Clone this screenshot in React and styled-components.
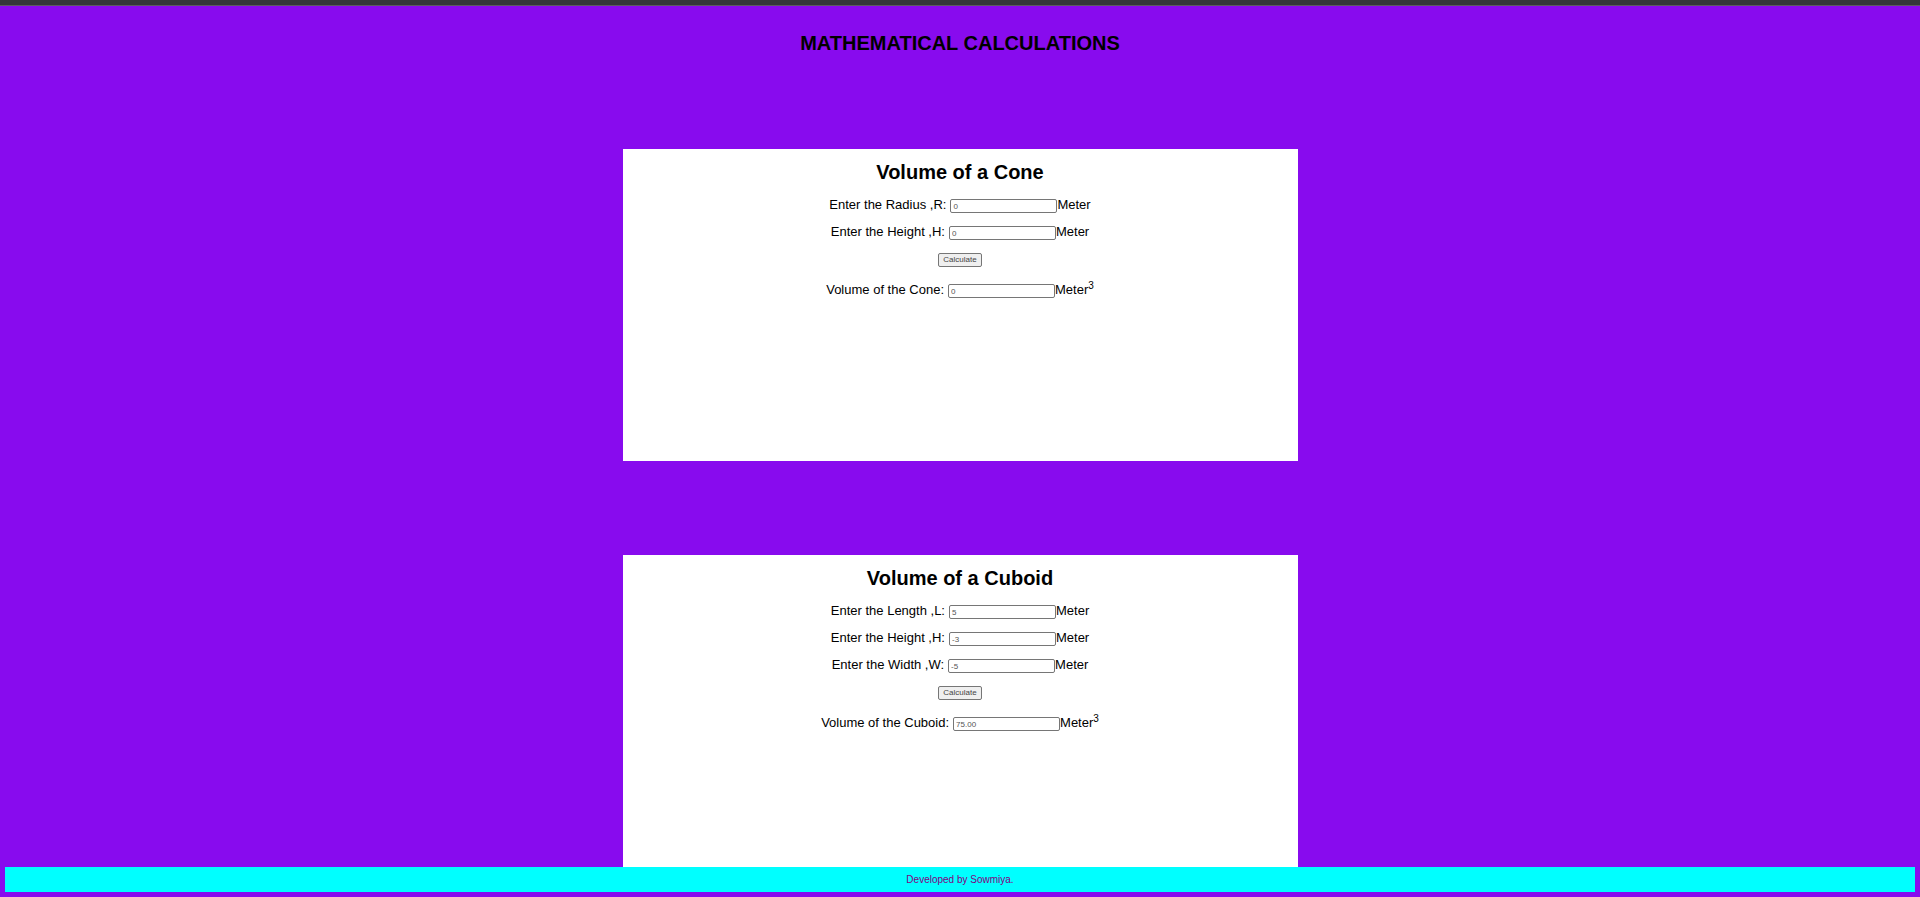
import React, { useState } from "react";
import styled, { createGlobalStyle } from "styled-components";

const GlobalStyle = createGlobalStyle`
  *, *::before, *::after { box-sizing: border-box; }
  body {
    margin: 0;
    background: #880bee;
    color: #000;
    font-family: Arial, "Liberation Sans", sans-serif;
    font-size: 13px;
  }
`;

const Page = styled.div`
  display: flex;
  flex-direction: column;
  min-height: 100vh;
  padding-bottom: 5px;
`;

const TopStrip = styled.div`
  height: 6px;
  background: #35363a;
  border-bottom: 1px solid #5c5b62;
`;

const Title = styled.h1`
  margin: 25px 0 93px;
  font-size: 20px;
  line-height: 25px;
  text-align: center;
`;

const Cards = styled.main`
  display: flex;
  flex-direction: column;
  align-items: center;
  gap: 94px;
`;

const Card = styled.form`
  width: 100%;
  max-width: 675px;
  min-height: 312px;
  padding: 11px 0;
  background: #fff;
  text-align: center;
`;

const CardTitle = styled.h2`
  margin: 0 0 12px;
  font-size: 20px;
  line-height: 25px;
`;

const Row = styled.div`
  display: flex;
  justify-content: center;
  align-items: center;
  height: 16px;
  margin-top: ${(p) => (p.$result ? "15px" : "11px")};
  line-height: 16px;
  white-space: pre;
`;

const Field = styled.input`
  width: 107px;
  height: 14px;
  margin: 2px 0 0 4px;
  padding: 1px 2px;
  border: 1px solid #767676;
  border-radius: 2px;
  background: #fff;
  color: #555;
  font: 8px Arial, "Liberation Sans", sans-serif;
`;

const Button = styled.button`
  width: 44px;
  height: 14px;
  margin-top: 2px;
  padding: 0;
  border: 1px solid #767676;
  border-radius: 2px;
  background: #efefef;
  color: #444;
  font: 8px/12px Arial, "Liberation Sans", sans-serif;
`;

const Power = styled.sup`
  align-self: flex-start;
  margin-top: -2px;
  font-size: 10px;
  line-height: 12px;
`;

const Footer = styled.footer`
  margin: 0 5px;
  background: #0ff;
  color: #800080;
  font-size: 10px;
  line-height: 25px;
  text-align: center;
`;

function Calculator({ id, title, inputs, resultLabel, initial, formula }) {
  const [values, setValues] = useState(inputs.map((i) => i.value));
  const [result, setResult] = useState(initial);

  const submit = (e) => {
    e.preventDefault();
    setResult(formula(...values.map(Number)).toFixed(2));
  };

  return (
    <Card onSubmit={submit}>
      <CardTitle>{title}</CardTitle>
      {inputs.map((input, n) => (
        <Row key={input.label}>
          <label htmlFor={`${id}-${n}`}>{input.label}</label>
          <Field
            id={`${id}-${n}`}
            value={values[n]}
            onChange={(e) =>
              setValues(values.map((v, k) => (k === n ? e.target.value : v)))
            }
          />
          <span>Meter</span>
        </Row>
      ))}
      <Row>
        <Button type="submit">Calculate</Button>
      </Row>
      <Row $result>
        <label htmlFor={`${id}-result`}>{resultLabel}</label>
        <Field id={`${id}-result`} value={result} readOnly />
        <span>Meter</span>
        <Power>3</Power>
      </Row>
    </Card>
  );
}

export default function App() {
  return (
    <>
      <GlobalStyle />
      <Page>
        <TopStrip />
        <Title>MATHEMATICAL CALCULATIONS</Title>
        <Cards>
          <Calculator
            id="cone"
            title="Volume of a Cone"
            inputs={[
              { label: "Enter the Radius ,R:", value: "0" },
              { label: "Enter the Height ,H:", value: "0" },
            ]}
            resultLabel="Volume of the Cone:"
            initial="0"
            formula={(r, h) => (Math.PI * r * r * h) / 3}
          />
          <Calculator
            id="cuboid"
            title="Volume of a Cuboid"
            inputs={[
              { label: "Enter the Length ,L:", value: "5" },
              { label: "Enter the Height ,H:", value: "-3" },
              { label: "Enter the Width ,W:", value: "-5" },
            ]}
            resultLabel="Volume of the Cuboid:"
            initial="75.00"
            formula={(l, h, w) => l * h * w}
          />
        </Cards>
        <Footer>Developed by Sowmiya.</Footer>
      </Page>
    </>
  );
}
